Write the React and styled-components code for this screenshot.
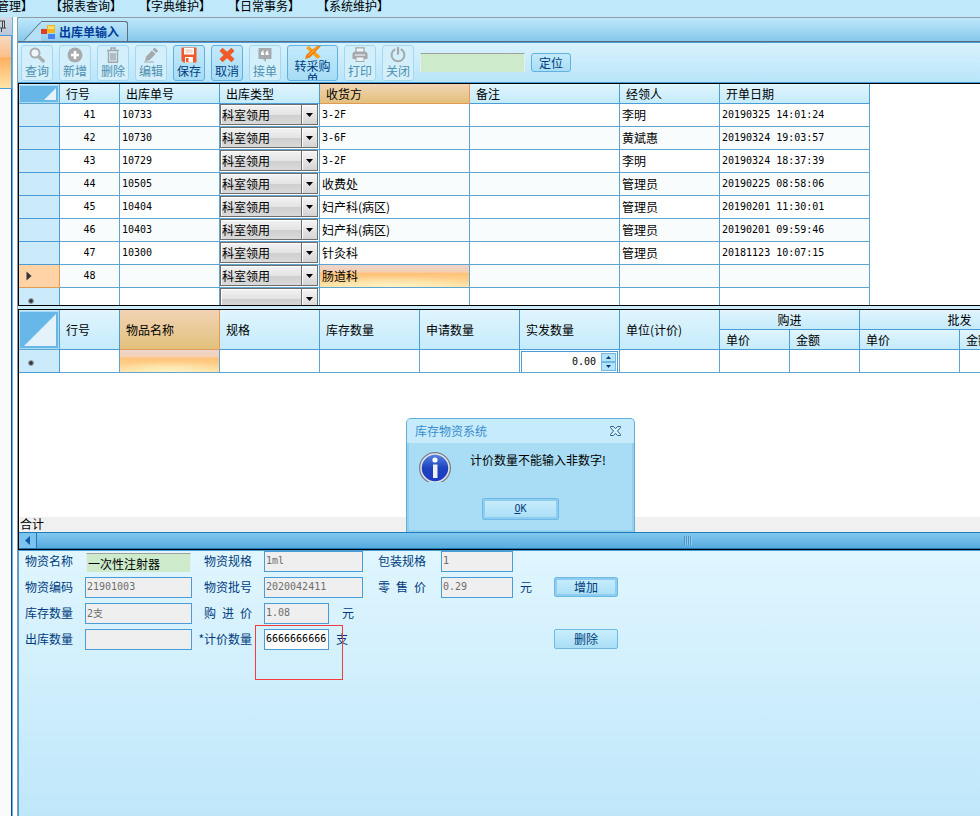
import React, { useState } from 'react';
import styled, { createGlobalStyle } from 'styled-components';

const menus = ['管理】', '【报表查询】', '【字典维护】', '【日常事务】', '【系统维护】'];

const orders = [
  { no: 41, code: '10733', receiver: '3-2F', person: '李明', date: '20190325 14:01:24' },
  { no: 42, code: '10730', receiver: '3-6F', person: '黄斌惠', date: '20190324 19:03:57' },
  { no: 43, code: '10729', receiver: '3-2F', person: '李明', date: '20190324 18:37:39' },
  { no: 44, code: '10505', receiver: '收费处', person: '管理员', date: '20190225 08:58:06' },
  { no: 45, code: '10404', receiver: '妇产科(病区)', person: '管理员', date: '20190201 11:30:01' },
  { no: 46, code: '10403', receiver: '妇产科(病区)', person: '管理员', date: '20190201 09:59:46' },
  { no: 47, code: '10300', receiver: '针灸科', person: '管理员', date: '20181123 10:07:15' },
  { no: 48, code: '', receiver: '肠道科', person: '', date: '', current: true },
];

const orderColumns = [
  { label: '行号', width: 60 },
  { label: '出库单号', width: 100 },
  { label: '出库类型', width: 100 },
  { label: '收货方', width: 150, active: true },
  { label: '备注', width: 150 },
  { label: '经领人', width: 100 },
  { label: '开单日期', width: 150 },
];

const itemColumns = [
  { label: '行号', width: 60 },
  { label: '物品名称', width: 100, active: true },
  { label: '规格', width: 100 },
  { label: '库存数量', width: 100 },
  { label: '申请数量', width: 100 },
  { label: '实发数量', width: 100 },
  { label: '单位(计价)', width: 100 },
];

const priceWidths = [70, 70, 100, 100];

const icons = {
  search: (
    <g fill="none" stroke="#a9adb0">
      <circle cx="6" cy="6" r="4.5" strokeWidth="2" fill="#eef6fa" />
      <path d="M9.8 9.8l4.4 4.2" strokeWidth="3.4" strokeLinecap="round" />
    </g>
  ),
  add: (
    <g>
      <circle cx="8" cy="8" r="7.5" fill="#a8abad" />
      <path d="M8 4v8M4 8h8" stroke="#fff" strokeWidth="2.6" />
    </g>
  ),
  remove: (
    <g fill="none" stroke="#a3a6a8" strokeWidth="1.4">
      <path d="M2 3.5h12M6 3V1h4v2" />
      <path d="M3.5 4.5v10.7h9V4.5M6 6v7.5M8 6v7.5M10 6v7.5" />
    </g>
  ),
  edit: (
    <g fill="#a6a9ab">
      <path d="M11.5 0.5l3.8 3.4-2 2.2-3.8-3.4zM8.8 3.5l3.8 3.4-6 6-4.6 1.3 1-4.4z" />
      <path d="M1 14.4h10v1H1z" />
    </g>
  ),
  save: (
    <g>
      <path d="M0.5 0.5h15v15h-13l-2-2z" fill="#f2592a" />
      <path d="M3 1h10v6.5H3zM4 10h8v5.5H4z" fill="#fff" />
      <path d="M5 11h2.5v4H5z" fill="#f2592a" />
      <path d="M4.5 3h7M4.5 5h7" stroke="#f4b59f" />
    </g>
  ),
  cancel: (
    <path d="M3.5 0.8L8 4.8l4.5-4 3 3.2L11.4 8l4.1 4-3 3.2-4.5-4-4.5 4-3-3.2L4.6 8 0.5 4z" fill="#f05a28" />
  ),
  receive: (
    <g>
      <path d="M1.5 1h13v11h-5.5v3l-3-3H1.5z" fill="#a7aaac" />
      <path d="M4 5.5L6 3.5h1L6 5.500h1V8H4zM8.500 5.500l2-2h1l-1 2h1V8h-3z" fill="#fff" />
    </g>
  ),
  convert: (
    <g>
      <path d="M1 2l3-2 11.500 10.500-3 2.500z" fill="#f5a01e" />
      <path d="M12 0h4L5 11.400 0 13l1.500-4.500z" fill="#f57c00" />
      <path d="M12.500 1L3.500 9.500" stroke="#ffc069" />
    </g>
  ),
  print: (
    <g>
      <path d="M4 5V0.8h8V5" fill="#eff7fa" stroke="#a5a8aa" strokeWidth="1.3" />
      <path d="M2.5 4.5h11l2 2V12h-15V6.5z" fill="#a5a8aa" />
      <path d="M3 8h10" stroke="#fff" />
      <path d="M4 10h8v4.5H4z" fill="#edf2f4" stroke="#a5a8aa" />
    </g>
  ),
  power: (
    <g fill="none" stroke="#a6a9ab" strokeLinecap="round">
      <path d="M4.5 2.6a6.4 6.4 0 1 0 7 0" strokeWidth="2" />
      <path d="M8 0.8v6" strokeWidth="2.2" />
    </g>
  ),
};

const tools = [
  { label: '查询', icon: 'search', disabled: true },
  { label: '新增', icon: 'add', disabled: true },
  { label: '删除', icon: 'remove', disabled: true },
  { label: '编辑', icon: 'edit', disabled: true },
  { label: '保存', icon: 'save' },
  { label: '取消', icon: 'cancel' },
  { label: '接单', icon: 'receive', disabled: true },
  { label: '转采购单', icon: 'convert', wide: true },
  { label: '打印', icon: 'print', disabled: true },
  { label: '关闭', icon: 'power', disabled: true },
];

const TypeCombo = ({ value }) => (
  <Combo>
    <ComboSelect aria-label="出库类型" defaultValue={value}>
      <option value={value}>{value}</option>
      {value && <option value="" />}
    </ComboSelect>
    <ComboArrow>
      <svg width="7" height="4" viewBox="0 0 7 4"><path d="M0 0h7L3.5 4z" fill="#000" /></svg>
    </ComboArrow>
  </Combo>
);

const NewRowMark = () => (
  <svg width="6" height="6" viewBox="0 0 6 6">
    <circle cx="3" cy="3" r="2" fill="#333" />
    <circle cx="3" cy="3" r="2.7" fill="none" stroke="#777" strokeWidth="0.6" />
  </svg>
);

const isLatin = (text) => /^[\x20-\x7e]*$/.test(text);

const App = () => {
  const [quantity, setQuantity] = useState('6666666666');

  return (
    <Page>
      <GlobalStyle />
      <MenuBar>
        {menus.map((menu) => <MenuItem key={menu} href="#">{menu}</MenuItem>)}
      </MenuBar>
      <Workspace>
        <SideDock>
          <DockHeader>
            <svg width="8" height="12" viewBox="0 0 8 12">
              <path d="M0 1h5M4.5 1v7M2.5 1v7M0 8h6M1.5 8v4" fill="none" stroke="#444" />
            </svg>
          </DockHeader>
          <DockActive />
        </SideDock>
        <Main>
          <TabStrip>
            <svg width="20" height="20" viewBox="0 0 20 20">
              <path d="M0 20L15 3q2.5-2.5 5-2.5V20z" fill="#b4e0f6" />
              <path d="M0 19.5L15 3q2.5-2.5 5-2.5" fill="none" stroke="#5f6e78" />
            </svg>
            <Tab>
              <svg width="14" height="14" viewBox="0 0 14 14">
                <path d="M6 0h8v8H6z" fill="#f3b51c" />
                <path d="M7 1h6v3H7z" fill="#ffdc6b" />
                <path d="M0 4h6v5H0z" fill="#d9412b" />
                <path d="M7 9h7v5H7z" fill="#4a7ff0" />
              </svg>
              出库单输入
            </Tab>
          </TabStrip>

          <Toolbar>
            {tools.map((tool) => (
              <ToolButton key={tool.label} disabled={tool.disabled} $wide={tool.wide}>
                <svg width="16" height="16" viewBox={tool.wide ? '0 0 16 13' : '0 0 16 16'}>{icons[tool.icon]}</svg>
                <span>{tool.label}</span>
              </ToolButton>
            ))}
            <SearchBox aria-label="定位" />
            <SmallButton>定位</SmallButton>
          </Toolbar>

          <OrderPane>
            <Grid>
              <colgroup>
                <col width="41" />
                {orderColumns.map((c) => <col key={c.label} width={c.width} />)}
              </colgroup>
              <thead>
                <tr>
                  <Corner>
                    <CornerBox $size={18}>
                      <svg width="12" height="12" viewBox="0 0 12 12"><path d="M12 0v12H0z" fill="#e4f2f9" /></svg>
                    </CornerBox>
                  </Corner>
                  {orderColumns.map((c) => <HeadCell key={c.label} $active={c.active} $height={20}>{c.label}</HeadCell>)}
                </tr>
              </thead>
              <tbody>
                {orders.map((row) => (
                  <Row key={row.no}>
                    <RowHead $current={row.current}>
                      {row.current && (
                        <svg width="6" height="10" viewBox="0 0 6 10"><path d="M0.5 0.5L5.5 5l-5 4.5z" fill="#333" /></svg>
                      )}
                    </RowHead>
                    <Cell $center $latin>{row.no}</Cell>
                    <Cell $latin>{row.code}</Cell>
                    <ComboCell><TypeCombo value="科室领用" /></ComboCell>
                    <Cell $latin={isLatin(row.receiver)} $glow={row.current}>{row.receiver}</Cell>
                    <Cell />
                    <Cell>{row.person}</Cell>
                    <Cell $latin>{row.date}</Cell>
                  </Row>
                ))}
                <Row>
                  <RowHead $isNew><NewRowMark /></RowHead>
                  <Cell />
                  <Cell />
                  <ComboCell><TypeCombo value="" /></ComboCell>
                  <Cell />
                  <Cell />
                  <Cell />
                  <Cell />
                </Row>
              </tbody>
            </Grid>
          </OrderPane>
          <Splitter />

          <ItemPane>
            <Grid>
              <colgroup>
                <col width="41" />
                {itemColumns.map((c) => <col key={c.label} width={c.width} />)}
                {priceWidths.map((w, i) => <col key={i} width={w} />)}
              </colgroup>
              <thead>
                <tr>
                  <Corner rowSpan={2}>
                    <CornerBox $size={38}>
                      <svg width="32" height="32" viewBox="0 0 32 32"><path d="M32 0v32H0z" fill="#e4f2f9" /></svg>
                    </CornerBox>
                  </Corner>
                  {itemColumns.map((c) => (
                    <HeadCell key={c.label} rowSpan={2} $active={c.active} $height={40}>{c.label}</HeadCell>
                  ))}
                  <HeadCell colSpan={2} $center $height={20}>购进</HeadCell>
                  <HeadCell colSpan={2} $center $height={20}>批发</HeadCell>
                </tr>
                <tr>
                  <HeadCell $height={20}>单价</HeadCell>
                  <HeadCell $height={20}>金额</HeadCell>
                  <HeadCell $height={20}>单价</HeadCell>
                  <HeadCell $height={20}>金额</HeadCell>
                </tr>
              </thead>
              <tbody>
                <Row>
                  <RowHead $isNew><NewRowMark /></RowHead>
                  <Cell />
                  <Cell $glow />
                  <Cell />
                  <Cell />
                  <Cell />
                  <ComboCell>
                    <Spinner>
                      <SpinInput aria-label="实发数量" defaultValue="0.00" />
                      <SpinButtons>
                        <SpinButton aria-label="增">
                          <svg width="5" height="3" viewBox="0 0 5 3"><path d="M0 3h5L2.5 0z" fill="#003c7d" /></svg>
                        </SpinButton>
                        <SpinButton aria-label="减">
                          <svg width="5" height="3" viewBox="0 0 5 3"><path d="M0 0h5L2.5 3z" fill="#003c7d" /></svg>
                        </SpinButton>
                      </SpinButtons>
                    </Spinner>
                  </ComboCell>
                  <Cell />
                  <Cell />
                  <Cell />
                  <Cell />
                  <Cell />
                </Row>
              </tbody>
            </Grid>
            <Summary>合计</Summary>
          </ItemPane>
          <ScrollBar>
            <ScrollButton aria-label="向左">
              <svg width="5" height="9" viewBox="0 0 5 9"><path d="M5 0v9L0 4.5z" fill="#0d5ba5" /></svg>
            </ScrollButton>
            <ScrollThumb>
              <svg width="8" height="9" viewBox="0 0 8 9">
                <path d="M0.5 0v9M2.5 0v9M4.5 0v9M6.5 0v9" stroke="#4b95c5" />
                <path d="M1.5 0v9M3.5 0v9M5.5 0v9M7.5 0v9" stroke="#8fcdf0" />
              </svg>
            </ScrollThumb>
          </ScrollBar>

          <Form onSubmit={(e) => e.preventDefault()}>
            <Label htmlFor="name">物资名称</Label>
            <Field><NameInput id="name" defaultValue="一次性注射器" /></Field>
            <Label htmlFor="spec">物资规格</Label>
            <Field><TextInput id="spec" $width={99} readOnly value="1ml" /></Field>
            <Label htmlFor="pack" $space={15}>包装规格</Label>
            <Field><TextInput id="pack" $width={72} readOnly value="1" /></Field>
            <span />
            <span />

            <Label htmlFor="code">物资编码</Label>
            <Field><TextInput id="code" $width={107} readOnly value="21901003" /></Field>
            <Label htmlFor="batch">物资批号</Label>
            <Field><TextInput id="batch" $width={99} readOnly value="2020042411" /></Field>
            <Label htmlFor="retail" $space={15}>零 售 价</Label>
            <Field><TextInput id="retail" $width={72} readOnly value="0.29" /></Field>
            <Unit>元</Unit>
            <FormButton type="button" $focused>增加</FormButton>

            <Label htmlFor="stock">库存数量</Label>
            <Field><TextInput id="stock" $width={107} readOnly value="2支" /></Field>
            <Label htmlFor="cost">购 进 价</Label>
            <Field $gap={13}><TextInput id="cost" $width={65} readOnly value="1.08" /><Unit>元</Unit></Field>
            <span />
            <span />
            <span />
            <span />

            <Label htmlFor="out">出库数量</Label>
            <Field><TextInput id="out" $width={107} readOnly value="" /></Field>
            <Label htmlFor="quantity">*计价数量</Label>
            <Field $gap={7}>
              <TextInput id="quantity" $width={65} value={quantity} onChange={(e) => setQuantity(e.target.value)} />
              <Unit>支</Unit>
              <ErrorFrame />
            </Field>
            <span />
            <span />
            <span />
            <FormButton type="button">删除</FormButton>
          </Form>
        </Main>
      </Workspace>

      <Dialog role="alertdialog" aria-labelledby="dialog-title">
        <DialogTitle>
          <span id="dialog-title">库存物资系统</span>
          <CloseButton aria-label="关闭">
            <svg width="11" height="10" viewBox="0 0 11 10">
              <path d="M0.5 0.5h3l2 2.2 2-2.2h3v1L7.500 5l3 3.500v1h-3l-2-2.200-2 2.200h-3v-1L3.500 5l-3-3.500z" fill="#d8f1fc" stroke="#2a5f92" />
            </svg>
          </CloseButton>
        </DialogTitle>
        <DialogBody>
          <svg width="32" height="30" viewBox="0 0 32 30">
            <defs>
              <linearGradient id="info" x1="0" y1="0" x2="0" y2="1">
                <stop offset="0" stopColor="#5c8ae6" />
                <stop offset="0.5" stopColor="#1d43bd" />
                <stop offset="1" stopColor="#1c39c4" />
              </linearGradient>
            </defs>
            <circle cx="16" cy="16" r="15" fill="url(#info)" stroke="#777d88" strokeWidth="2" />
            <circle cx="16" cy="16" r="14" fill="none" stroke="#e1e3e8" strokeWidth="1.5" />
            <circle cx="16" cy="8" r="2.6" fill="#fff" />
            <path d="M14 12.5h4.500V26H14z" fill="#eef0f5" />
          </svg>
          <Message>计价数量不能输入非数字!</Message>
        </DialogBody>
        <OkButton><u>O</u>K</OkButton>
      </Dialog>
    </Page>
  );
};

const latin = "'DejaVu Sans Mono', 'Noto Sans CJK SC', monospace";

const GlobalStyle = createGlobalStyle`
  * {
    box-sizing: border-box;
  }

  body {
    margin: 0;
    overflow: hidden;
    background: #bfe8fb;
  }

  body, button, input, select {
    font-family: 'Noto Sans CJK SC', sans-serif;
    font-size: 12px;
    line-height: 16px;
    color: #000;
  }

  button, input, select {
    margin: 0;
    padding: 0;
    border-radius: 0;
    outline: none;
  }

  svg {
    display: block;
    flex-shrink: 0;
  }
`;

const Page = styled.div`
  position: relative;
  display: flex;
  flex-direction: column;
  height: 100vh;
  overflow: hidden;
`;

const MenuBar = styled.nav`
  display: flex;
  flex-shrink: 0;
  gap: 17px;
  height: 17px;
  line-height: 11px;
  white-space: nowrap;
  background: #bfe8fb;
`;

const MenuItem = styled.a`
  display: flex;
  justify-content: flex-end;
  width: 72px;
  color: #000;
  text-decoration: none;

  &:first-child {
    width: 33px;
  }
`;

const Workspace = styled.div`
  display: flex;
  flex: 1;
  min-height: 0;
  background: #fff;
`;

const SideDock = styled.aside`
  width: 13px;
  margin-right: 4px;
  flex-shrink: 0;
  border-right: 1px solid #5cb4ec;
  background: #fafafa;
  box-shadow: inset -1px 0 #0b4a96;
`;

const DockHeader = styled.div`
  display: flex;
  align-items: center;
  height: 19px;
  border-bottom: 1px solid #4a9cd6;
  background: linear-gradient(#d3dbe6, #b9c8da);
`;

const DockActive = styled.div`
  height: 53px;
  border-right: 1px solid #4a9cd6;
  border-bottom: 1px solid #4a9cd6;
  background: linear-gradient(#f8d9c0, #fbc08a 40%, #fdb05f 42%, #ffe3a8);
`;

const Main = styled.main`
  display: flex;
  flex: 1;
  flex-direction: column;
  min-width: 0;
  border-top: 1px solid #8f9ba3;
  border-left: 1px solid #8f9ba3;
`;

const TabStrip = styled.div`
  display: flex;
  flex-shrink: 0;
  align-items: flex-end;
  height: 24px;
  padding-left: 6px;
  border-bottom: 1px solid #5f6e78;
  background: linear-gradient(#bfe8fb, #86c8ec);
`;

const Tab = styled.div`
  display: flex;
  align-items: center;
  gap: 4px;
  height: 20px;
  margin-left: -3px;
  padding-right: 8px;
  border-top: 1px solid #5f6e78;
  border-right: 1px solid #5f6e78;
  border-top-right-radius: 3px;
  background: linear-gradient(#bce5f9, #90cdee);
  color: #003c9a;
  font-weight: bold;
`;

const Toolbar = styled.div`
  display: flex;
  flex-shrink: 0;
  align-items: flex-start;
  gap: 6px;
  height: 41px;
  padding: 2px 3px;
  border-top: 1px solid #4a9cd6;
  border-bottom: 1px solid #4a9cd6;
  background: linear-gradient(#d9f2fd, #b9e5f9);
`;

const ToolButton = styled.button`
  display: flex;
  flex-direction: column;
  align-items: center;
  justify-content: ${props => props.$wide ? 'flex-start' : 'center'};
  width: ${props => props.$wide ? '51px' : '32px'};
  height: 36px;
  overflow: hidden;
  border: 1px solid ${props => props.disabled ? '#a3d8f2' : '#62b0e0'};
  border-radius: 3px;
  background: ${props => props.disabled ? '#d3effb' : 'linear-gradient(#c3eafb, #a6dcf6)'};
  color: ${props => props.disabled ? '#4d90b0' : '#003c7d'};
  line-height: ${props => props.$wide ? '13px' : '16px'};

  svg {
    height: ${props => props.$wide ? '13px' : '16px'};
  }

  span {
    width: ${props => props.$wide ? '38px' : 'auto'};
    white-space: ${props => props.$wide ? 'normal' : 'nowrap'};
  }
`;

const SearchBox = styled.input`
  width: 105px;
  height: 19px;
  margin-top: 8px;
  border: 1px solid #e6eef0;
  border-top-color: #a0a0a0;
  border-bottom: 0;
  background: #cdebcb;
`;

const SmallButton = styled.button`
  width: 40px;
  height: 19px;
  margin-top: 8px;
  border: 1px solid #62b0e0;
  border-radius: 3px;
  background: linear-gradient(#c3eafb, #a9def6);
  color: #003c7d;
`;

const OrderPane = styled.section`
  flex-shrink: 0;
  height: 223px;
  overflow: hidden;
  border: solid #000;
  border-width: 1px 0 1px 1px;
  background: #fff;
`;

const Splitter = styled.div`
  flex-shrink: 0;
  height: 3px;
  background: #cdecfa;
`;

const ItemPane = styled.section`
  display: flex;
  flex-direction: column;
  flex-shrink: 0;
  height: 223px;
  overflow: hidden;
  border-top: 1px solid #000;
  border-left: 1px solid #000;
  background: #fff;
`;

const Grid = styled.table`
  width: 0;
  table-layout: fixed;
  border-collapse: separate;
  border-spacing: 0;

  th, td {
    padding: 0;
    border: solid #5fa5cf;
    border-width: 0 1px 1px 0;
    overflow: hidden;
    white-space: nowrap;
  }
`;

const Corner = styled.th`
  background: #c9ebfb;
`;

const CornerBox = styled.div`
  display: flex;
  align-items: flex-end;
  justify-content: flex-end;
  height: ${props => props.$size}px;
  padding: 2px;
  border: 1px solid #a9dbf4;
  background: #67b8e8;
`;

const HeadCell = styled.th`
  height: ${props => props.$height}px;
  && {
    padding-left: ${props => props.$center ? 0 : 6}px;
    border-color: ${props => props.$active ? '#e39a55' : '#4a9cd6'};
  }
  background: ${props => props.$active ? 'linear-gradient(#f1d4b4, #e3c07c)' : 'linear-gradient(#e0f5fe, #c5ebfb)'};
  font-weight: normal;
  text-align: ${props => props.$center ? 'center' : 'left'};
`;

const Row = styled.tr`
  height: 23px;

  &:nth-child(even) {
    background: #f8fcfd;
  }
`;

const RowHead = styled.th`
  background: ${props => props.$current ? '#ffd3a6' : '#cbebfb'};

  && {
    padding-top: ${props => props.$isNew ? 3 : 0}px;
    padding-left: ${props => props.$isNew ? 9 : 7}px;
    border-color: ${props => props.$current ? '#e39a55' : '#4a9cd6'};
  }
`;

const glow = `
  radial-gradient(ellipse 60% 50% at 50% 100%, #fff3c4, rgba(255, 243, 196, 0)),
  linear-gradient(#ecd6ce, #f6cfae 33%, #ffc176 36%, #fde2a6)
`;

const Cell = styled.td`
  font-family: ${props => props.$latin ? latin : 'inherit'};
  font-size: ${props => props.$latin ? '10px' : '12px'};
  text-align: ${props => props.$center ? 'center' : 'left'};
  background: ${props => props.$glow ? glow : 'transparent'};

  && {
    padding-left: ${props => props.$center ? 0 : 2}px;
  }
`;

const ComboCell = styled.td`
  vertical-align: top;
`;

const Combo = styled.div`
  position: relative;
  height: 22px;
  padding-right: 1px;
`;

const ComboSelect = styled.select`
  display: block;
  width: 100%;
  height: 21px;
  padding-left: 1px;
  appearance: none;
  border: 1px solid #6e6e6e;
  background: linear-gradient(#f2f2f2, #e4e4e4 50%, #cfcfcf 55%, #dadada);
  box-shadow: inset 1px 1px #fff;
`;

const ComboArrow = styled.span`
  position: absolute;
  top: 1px;
  right: 2px;
  display: flex;
  align-items: center;
  justify-content: center;
  width: 16px;
  height: 19px;
  border-left: 1px solid #6e6e6e;
  background: linear-gradient(#f6f6f6, #d4d4d4);
  box-shadow: inset 1px 1px #fff;
  pointer-events: none;
`;

const Spinner = styled.div`
  display: flex;
  height: 21px;
  margin: 1px 1px 0;
  border: 1px solid #4a9cd6;
  border-bottom: 0;
  background: #fff;
`;

const SpinInput = styled.input`
  flex: 1;
  min-width: 0;
  padding-right: 5px;
  border: 0;
  background: transparent;
  font-family: ${latin};
  font-size: 10px;
  text-align: right;
`;

const SpinButtons = styled.div`
  display: flex;
  flex-direction: column;
  width: 15px;
  margin: 1px 1px 0 0;
`;

const SpinButton = styled.button`
  display: flex;
  align-items: center;
  justify-content: center;
  height: 9px;
  border: 1px solid #6fb9e6;
  background: #b5e3f8;
`;

const Summary = styled.div`
  height: 15px;
  margin-top: auto;
  padding-left: 1px;
  background: #f0f0f0;
  line-height: 13px;
`;

const ScrollBar = styled.div`
  display: flex;
  flex-shrink: 0;
  height: 18px;
  border: solid #000;
  border-width: 0 0 1px 1px;
`;

const ScrollButton = styled.button`
  display: flex;
  align-items: center;
  justify-content: center;
  width: 18px;
  border: solid #1f78b8;
  border-width: 1px 1px 1px 0;
  background: #7cc4ee;
`;

const ScrollThumb = styled.div`
  display: flex;
  flex: 1;
  align-items: center;
  justify-content: center;
  padding-left: 358px;
  border: solid #1f78b8;
  border-width: 1px 0;
  background: linear-gradient(#81c8ef, #57abde);
`;

const Form = styled.form`
  display: grid;
  flex: 1;
  grid-template-columns: 66px 107px 72px 99px 78px 79px 34px 64px;
  grid-auto-rows: 21px;
  gap: 5px 0;
  align-content: start;
  border-top: 1px solid #4a9cd6;
  border-left: 1px solid #4a9cd6;
  background: linear-gradient(#e0f6ff, #bfe7fa);
  color: #003c7d;
`;

const Label = styled.label`
  justify-self: end;
  min-width: 48px;
  margin-right: ${props => props.$space || 12}px;
  line-height: 20px;
  text-align-last: justify;
  white-space: nowrap;
`;

const Field = styled.div`
  position: relative;
  display: flex;
  gap: ${props => props.$gap || 0}px;
`;

const Unit = styled.span`
  line-height: 20px;
`;

const TextInput = styled.input`
  width: ${props => props.$width}px;
  height: 21px;
  flex-shrink: 0;
  padding: 0 1px 2px;
  border: 1px solid #4a9cd6;
  background: ${props => props.readOnly ? '#efefef' : '#fff'};
  color: ${props => props.readOnly ? '#6d6d6d' : '#000'};
  font-family: ${latin};
  font-size: 10px;
`;

const NameInput = styled.input`
  width: 105px;
  height: 19px;
  margin: 2px 1px 0;
  padding-left: 1px;
  border: 1px solid #e6eef0;
  border-top-color: #a0a0a0;
  border-bottom: 0;
  background: #cdebcb;
`;

const ErrorFrame = styled.span`
  position: absolute;
  top: -4px;
  left: -9px;
  width: 88px;
  height: 55px;
  border: 1px solid #f43c3c;
  pointer-events: none;
`;

const FormButton = styled.button`
  height: 20px;
  border: 1px solid #6fb9e6;
  border-radius: 2px;
  background: linear-gradient(#c9eefc, #a9def6);
  box-shadow: ${props => props.$focused ? 'inset 0 0 0 2px #8fcdf0' : 'none'};
  color: #003c7d;
`;

const Dialog = styled.div`
  position: absolute;
  top: 418px;
  left: 406px;
  display: flex;
  flex-direction: column;
  width: 229px;
  height: 114px;
  border: 1px solid #62aed6;
  border-bottom: 0;
  border-radius: 5px 5px 0 0;
  background: #a8ddf5;
  box-shadow: inset 2px -2px #93cfee, inset -2px 0 #93cfee;
`;

const DialogTitle = styled.div`
  display: flex;
  align-items: center;
  justify-content: space-between;
  height: 24px;
  padding: 0 13px 0 8px;
  border-radius: 4px 4px 0 0;
  background: #c5ebfd;
  color: #3a8ccc;
`;

const CloseButton = styled.button`
  border: 0;
  background: none;
`;

const DialogBody = styled.div`
  display: flex;
  gap: 19px;
  padding: 9px 12px 0;
`;

const Message = styled.p`
  margin: 0;
  white-space: nowrap;
`;

const OkButton = styled.button`
  align-self: center;
  width: 77px;
  height: 22px;
  margin-top: 16px;
  border: 1px solid #6fb9e6;
  border-radius: 2px;
  background: linear-gradient(#c9eefc, #a9def6);
  box-shadow: inset 0 0 0 2px #8fcdf0;
  color: #003c7d;
  font-family: ${latin};
  font-size: 10px;
`;

export default App;
